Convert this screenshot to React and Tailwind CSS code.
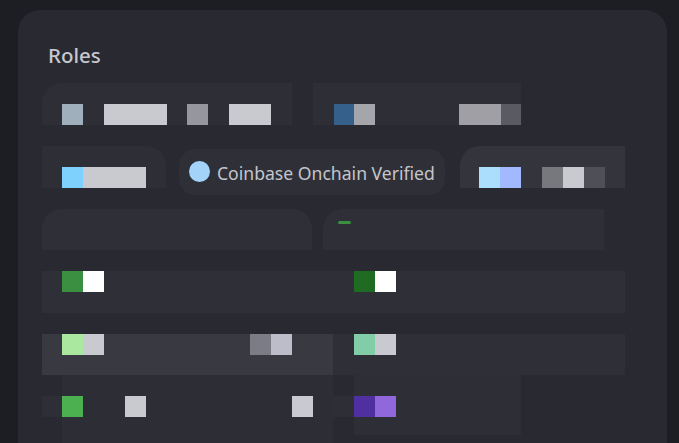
const GRAY = 'bg-[#c9cad0]';

// Blurred role pills: each cell is one censored mosaic block
function Cells({ cells }) {
  return cells.map((c) => <div key={c} className={`h-[21px] shrink-0 ${c}`} />);
}

function Row({ className = '', children }) {
  return <div className={`flex shrink-0 ${className}`}>{children}</div>;
}

export default function App() {
  return (
    <div className="h-[443px] w-[679px] overflow-hidden bg-[#1d1e23] pt-[10px] pl-[18px] pr-[12px] font-['Noto_Sans',sans-serif]">
      <div className="h-[460px] rounded-[22px] bg-[#292a31] pl-[24px] pt-[32px]">
        <h2 className="ml-[6px] h-[41px] text-[20.5px] leading-[26px] font-medium text-[#c6c7cf]">Roles</h2>

        <div className="flex flex-col gap-[21px]">
          {/* row 1 */}
          <Row className="h-[42px]">
            <div className="flex w-[250px] items-end rounded-tl-[20px] bg-[#2e2f36] pl-[20px]">
              <Cells cells={['w-[21px] bg-[#9fb0bc]', `ml-[21px] w-[63px] ${GRAY}`, 'ml-[20px] w-[21px] bg-[#96979e]', `ml-[21px] w-[42px] ${GRAY}`]} />
            </div>
            <div className="ml-[21px] flex w-[208px] items-end bg-[#2e2f36] pl-[21px]">
              <Cells cells={['w-[20px] bg-[#36608c]', 'w-[21px] bg-[#a5a6ab]', 'ml-[84px] w-[42px] bg-[#a09fa6]', 'w-[20px] bg-[#595a62]']} />
            </div>
          </Row>

          {/* row 2 */}
          <Row className="h-[42px]">
            <div className="flex w-[124px] items-end rounded-tr-[20px] bg-[#2e2f36] pl-[20px]">
              <Cells cells={['w-[21px] bg-[#7ed0fd]', `w-[63px] ${GRAY}`]} />
            </div>
            <div className="mt-[3px] ml-[13px] flex h-[46px] w-[266px] items-center rounded-[16px] bg-[#2f3037] pl-[10px]">
              <div className="-mt-[1px] size-[21px] rounded-full bg-[#a3d3f8]" />
              <span className="mt-[1px] ml-[7px] text-[17.6px] leading-[24px] whitespace-nowrap text-[#c4c5cd]">Coinbase Onchain Verified</span>
            </div>
            <div className="ml-[15px] flex w-[165px] items-end rounded-tl-[20px] bg-[#34353c] pl-[19px]">
              <Cells cells={['w-[21px] bg-[#abdefc]', 'w-[21px] bg-[#a2b8ff]', 'ml-[21px] w-[21px] bg-[#77787e]', `w-[21px] ${GRAY}`, 'w-[21px] bg-[#4e4f57]']} />
            </div>
          </Row>

          {/* row 3 */}
          <Row className="h-[41px]">
            <div className="w-[270px] rounded-t-[20px] bg-[#2f3037]" />
            <div className="ml-[11px] w-[281px] rounded-tl-[20px] bg-[#2f3037] pl-[15px]">
              <div className="mt-[12px] h-[3px] w-[13px] rounded-full bg-[#3a9040]" />
            </div>
          </Row>

          {/* row 4 */}
          <Row className="h-[42px]">
            <div className="flex w-[291px] items-start bg-[#2f3037] pl-[20px]">
              <Cells cells={['w-[21px] bg-[#3a9040]', 'w-[21px] bg-white']} />
            </div>
            <div className="flex w-[292px] items-start bg-[#2f3037] pl-[21px]">
              <Cells cells={['w-[21px] bg-[#1e6b21]', 'w-[21px] bg-white']} />
            </div>
          </Row>

          {/* row 5 */}
          <Row className="h-[41px]">
            <div className="flex w-[291px] items-start bg-[#383941] pl-[20px]">
              <Cells cells={['w-[21px] bg-[#aae8a0]', `w-[21px] ${GRAY}`, 'ml-[146px] w-[21px] bg-[#7b7c86]', 'w-[21px] bg-[#bdbdc9]']} />
            </div>
            <div className="flex w-[292px] items-start bg-[#2f3037] pl-[21px]">
              <Cells cells={['w-[21px] bg-[#80cda8]', `w-[21px] ${GRAY}`]} />
            </div>
          </Row>

          {/* row 6, runs off the bottom */}
          <Row className="-mt-[21px] h-[68px]">
            <div className="mt-[21px] h-[21px] w-[20px] bg-[#2e2f36]" />
            <div className="flex w-[271px] items-start bg-[#2d2e35] pt-[21px]">
              <Cells cells={['w-[21px] bg-[#4caf50]', `ml-[42px] w-[21px] ${GRAY}`, `ml-[146px] w-[21px] ${GRAY}`]} />
            </div>
            <div className="mt-[21px] h-[21px] w-[21px] bg-[#2e2f36]" />
            <div className="flex h-[60px] w-[167px] items-start bg-[#2e2f36] pt-[21px]">
              <Cells cells={['w-[21px] bg-[#5030a0]', 'w-[21px] bg-[#9068dc]']} />
            </div>
          </Row>
        </div>
      </div>
    </div>
  );
}
